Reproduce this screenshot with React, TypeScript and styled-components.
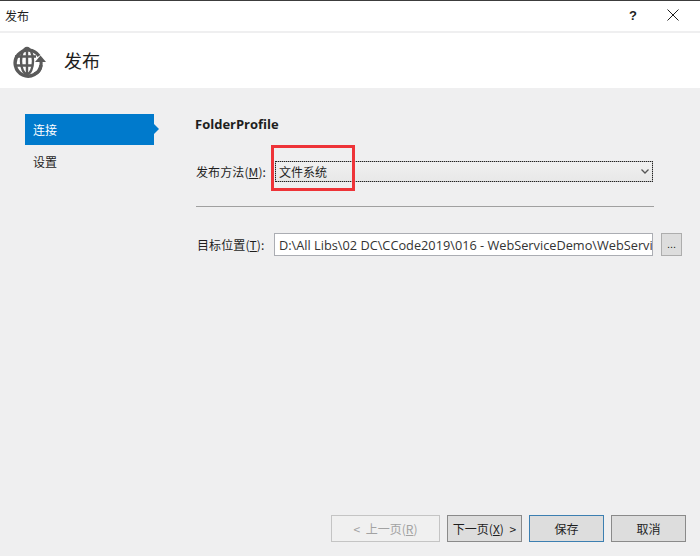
import React from 'react';
import styled, { createGlobalStyle } from 'styled-components';

const GlobalStyle = createGlobalStyle`
  html, body { margin: 0; padding: 0; }
  body {
    width: 700px;
    height: 556px;
    overflow: hidden;
    font-family: "Noto Sans CJK SC", "Liberation Sans", sans-serif;
    font-size: 12px;
    color: #1e1e1e;
  }
`;

const Dialog = styled.div`
  width: 700px;
  height: 556px;
  display: flex;
  flex-direction: column;
  background: #efeff0;
  border-top: 1px solid #3c3c3c;
  box-sizing: border-box;
`;

const TitleBar = styled.div`
  height: 30px;
  flex: none;
  display: flex;
  align-items: center;
  background: #ffffff;
  padding: 0 21px 2px 5px;
  box-sizing: border-box;
`;

const TitleText = styled.span`
  font-size: 12px;
  flex: 1;
`;

const HelpMark = styled.span`
  font-family: "Liberation Sans", sans-serif;
  font-size: 13px;
  font-weight: 700;
  margin-right: 30px;
`;

const Header = styled.div`
  height: 55px;
  flex: none;
  margin-top: 2px;
  background: #ffffff;
  display: flex;
  align-items: center;
  padding-left: 12px;
  box-sizing: border-box;
`;

const HeaderTitle = styled.h1`
  margin: 0 0 2px 18px;
  font-size: 18px;
  font-weight: 400;
`;

const Body = styled.div`
  flex: 1;
  display: flex;
  padding: 26px 0 0 25px;
  min-height: 0;
`;

const Nav = styled.nav`
  width: 170px;
  flex: none;
  display: flex;
  flex-direction: column;
`;

const NavItem = styled.div<{ $active?: boolean }>`
  position: relative;
  width: 129px;
  height: 31px;
  display: flex;
  align-items: center;
  padding-left: 8px;
  box-sizing: border-box;
  font-size: 12px;
  color: ${p => (p.$active ? '#ffffff' : '#1e1e1e')};
  background: ${p => (p.$active ? '#007acc' : 'transparent')};
  margin-bottom: 1px;

  ${p => p.$active && `
    &::after {
      content: "";
      position: absolute;
      left: 100%;
      top: 10px;
      border-left: 5px solid #007acc;
      border-top: 5px solid transparent;
      border-bottom: 5px solid transparent;
    }
  `}
`;

const Main = styled.main`
  width: 459px;
  flex: none;
  display: flex;
  flex-direction: column;
  position: relative;
`;

const ProfileName = styled.h2`
  margin: 1px 0 0;
  font-family: "Open Sans", "Liberation Sans", sans-serif;
  font-size: 13px;
  font-weight: 700;
  line-height: 18px;
  color: #1e1e1e;
`;

const FormRow = styled.div`
  display: flex;
  align-items: center;
`;

const MethodRow = styled(FormRow)`
  margin-top: 28px;
  padding-left: 1px;
`;

const TargetRow = styled(FormRow)`
  margin-top: 26px;
  padding-left: 2px;
  width: 490px;
`;

const Label = styled.label<{ $width: number }>`
  width: ${p => p.$width}px;
  flex: none;
  font-size: 12px;
  letter-spacing: 0.1px;
  white-space: nowrap;
`;

const Combo = styled.div`
  position: relative;
  width: 378px;
  height: 21px;
  flex: none;
  box-sizing: border-box;
  border: 1px solid #a8a8a8;
  outline: 1px dotted #222222;
  outline-offset: -1px;
  background: linear-gradient(#f0f0f0, #e8e8e8);
  display: flex;
  align-items: center;
  justify-content: space-between;
  padding: 0 3px 0 3px;
  font-size: 12px;
`;

const Highlight = styled.div`
  position: absolute;
  left: -5px;
  top: -17px;
  width: 84px;
  height: 46px;
  box-sizing: border-box;
  border: 3px solid #ee3338;
  pointer-events: none;
`;

const Divider = styled.hr`
  margin: 24px 0 0 1px;
  width: 458px;
  height: 1px;
  border: 0;
  background: #a0a0a0;
`;

const PathInput = styled.div`
  width: 379px;
  height: 23px;
  flex: none;
  box-sizing: border-box;
  border: 1px solid #abadb3;
  background: #ffffff;
  display: flex;
  align-items: center;
  padding-left: 4px;
  overflow: hidden;
  white-space: nowrap;
  font-family: "Open Sans", "Liberation Sans", sans-serif;
  font-size: 12.75px;
  color: #333333;
`;

const BrowseButton = styled.button`
  margin-left: 8px;
  width: 21px;
  height: 23px;
  flex: none;
  padding: 0 0 2px;
  box-sizing: border-box;
  border: 1px solid #adadad;
  background: #dddddd;
  font-family: "Liberation Sans", sans-serif;
  font-size: 11px;
  color: #1e1e1e;
`;

const Footer = styled.footer`
  height: 41px;
  flex: none;
  display: flex;
  justify-content: flex-end;
  align-items: flex-start;
  gap: 7px;
  padding-right: 14px;
  box-sizing: border-box;
`;

const DialogButton = styled.button<{ $wide?: boolean; $primary?: boolean }>`
  width: ${p => (p.$wide ? 109 : 75)}px;
  height: 27px;
  padding: 0;
  box-sizing: border-box;
  border: 1px solid ${p => (p.$primary ? '#3c7fb1' : '#8a8a8a')};
  background: #dddddd;
  font-family: inherit;
  font-size: 12px;
  word-spacing: 3px;
  color: #1e1e1e;
  white-space: nowrap;

  &:disabled {
    border-color: #c4c4c4;
    background: #f0f0f0;
    color: #a2a2a2;
  }
`;

const Key = styled.span`
  text-decoration: underline;
`;

const GlobeIcon = () => (
  <svg width="34" height="34" viewBox="0 0 34 34" fill="none" stroke="#5a5a5a">
    <path d="M27 12A13 13 0 1 0 29 21" strokeWidth="3.4" />
    <ellipse cx="15" cy="17" rx="6" ry="13" strokeWidth="2.4" />
    <path d="M15 4v26M3 12.5h21M3 21.5h17" strokeWidth="2.4" />
    <path d="M22 30c5-1 8-6 7-13" strokeWidth="3" />
    <path d="M23 18l5.5-6.5L34 18z" fill="#5a5a5a" stroke="none" />
  </svg>
);

const CloseIcon = () => (
  <svg width="12" height="12" viewBox="0 0 12 12" stroke="#1e1e1e" strokeWidth="1">
    <path d="M.5.5l11 11M11.5.5l-11 11" />
  </svg>
);

const ChevronIcon = () => (
  <svg width="8" height="5" viewBox="0 0 8 5" fill="none" stroke="#555555" strokeWidth="1.3">
    <path d="M.5.5L4 4 7.5.5" />
  </svg>
);

export default function App() {
  return (
    <>
      <GlobalStyle />
      <Dialog>
        <TitleBar>
          <TitleText>发布</TitleText>
          <HelpMark>?</HelpMark>
          <CloseIcon />
        </TitleBar>
        <Header>
          <GlobeIcon />
          <HeaderTitle>发布</HeaderTitle>
        </Header>
        <Body>
          <Nav>
            <NavItem $active>连接</NavItem>
            <NavItem>设置</NavItem>
          </Nav>
          <Main>
            <ProfileName>FolderProfile</ProfileName>
            <MethodRow>
              <Label $width={79}>发布方法(<Key>M</Key>):</Label>
              <Combo>
                <span>文件系统</span>
                <ChevronIcon />
                <Highlight />
              </Combo>
            </MethodRow>
            <Divider />
            <TargetRow>
              <Label $width={77}>目标位置(<Key>T</Key>):</Label>
              <PathInput>D:\All Libs\02 DC\CCode2019\016 - WebServiceDemo\WebServi</PathInput>
              <BrowseButton>...</BrowseButton>
            </TargetRow>
          </Main>
        </Body>
        <Footer>
          <DialogButton $wide disabled>&lt; 上一页(<Key>R</Key>)</DialogButton>
          <DialogButton>下一页(<Key>X</Key>) &gt;</DialogButton>
          <DialogButton $primary>保存</DialogButton>
          <DialogButton>取消</DialogButton>
        </Footer>
      </Dialog>
    </>
  );
}
